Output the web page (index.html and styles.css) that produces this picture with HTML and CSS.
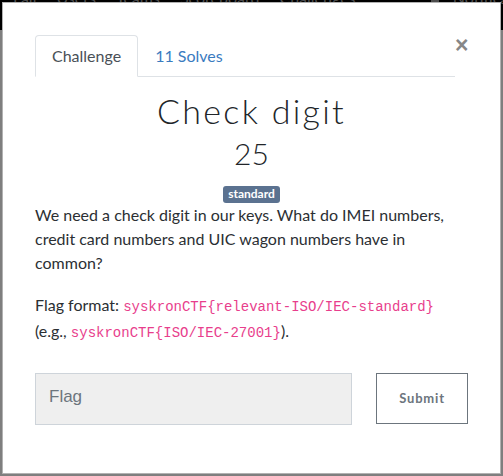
FILE: index.html
```html
<!DOCTYPE html>
<html lang="en">
<head>
<meta charset="utf-8">
<title>Check digit</title>
<link rel="stylesheet" href="styles.css">
</head>
<body>
<nav class="navbar">
  <ul class="nav-items">
    <li>Fall</li>
    <li>Users</li>
    <li>Teams</li>
    <li>Scoreboard</li>
    <li>Challenges</li>
  </ul>
  <div class="nav-right"><span class="bell"></span><span>Notifications</span></div>
</nav>
<div class="backdrop"></div>
<div class="modal">
  <div class="modal-head">
    <ul class="tabs">
      <li class="tab active">Challenge</li>
      <li class="tab">11 Solves</li>
    </ul>
    <button class="close" type="button">×</button>
  </div>
  <div class="modal-body">
    <h2 class="title">Check digit</h2>
    <h3 class="value">25</h3>
    <span class="badge">standard</span>
    <div class="desc">
      <p>We need a check digit in our keys. What do IMEI numbers, credit card numbers and UIC wagon numbers have in common?</p>
      <p>Flag format: <code>syskronCTF{relevant-ISO/IEC-standard}</code> (e.g., <code>syskronCTF{ISO/IEC-27001}</code>).</p>
    </div>
    <form class="flag-row">
      <input class="flag-input" type="text" placeholder="Flag">
      <button class="submit" type="button">Submit</button>
    </form>
  </div>
</div>
</body>
</html>
```
FILE: styles.css
```css
* { box-sizing: border-box; }
html, body { margin: 0; padding: 0; }
body {
  width: 503px;
  height: 476px;
  overflow: hidden;
  background: #ffffff;
  font-family: Lato, "Liberation Sans", sans-serif;
  color: #212529;
}
.navbar {
  height: 30px;
  background: #000;
  display: flex;
  justify-content: space-between;
  overflow: hidden;
}
.nav-items {
  list-style: none;
  margin: -12px 0 0 13px;
  padding: 0;
  display: flex;
  gap: 20px;
  height: 20px;
  font-size: 16px;
  line-height: 20px;
  color: #9a9a9a;
}
.nav-right {
  margin-top: -12px;
  margin-right: -40px;
  display: flex;
  gap: 14px;
  height: 20px;
  font-size: 16px;
  line-height: 20px;
  color: #9a9a9a;
}
.bell {
  width: 8px;
  height: 20px;
  background: #9a9a9a;
  margin-top: -4px;
}
.backdrop {
  position: absolute;
  inset: 0;
  background: rgba(0, 0, 0, 0.5);
}
.modal {
  position: absolute;
  left: 2px;
  top: 2px;
  width: 499px;
  height: 472px;
  background: #fff;
  border: 1px solid rgba(0, 0, 0, 0.3);
  padding: 32px;
}
.modal-head {
  display: flex;
  align-items: flex-start;
}
.tabs {
  flex: 1;
  list-style: none;
  margin: 0;
  padding: 0;
  display: flex;
  border-bottom: 1px solid #dee2e6;
  height: 42px;
}
.tab {
  padding: 8px 16px;
  font-size: 16px;
  line-height: 24px;
  color: #3a7bbf;
  border: 1px solid transparent;
  border-top-left-radius: 4px;
  border-top-right-radius: 4px;
  height: 42px;
}
.tab.active {
  color: #495057;
  background: #fff;
  border-color: #dee2e6 #dee2e6 #fff;
}
.close {
  width: 13px;
  padding: 0;
  margin: 0;
  border: 0;
  background: none;
  font-family: "Liberation Sans", sans-serif;
  font-weight: 700;
  font-size: 23px;
  line-height: 20px;
  color: #878787;
  text-align: right;
}
.modal-body {
  text-align: center;
}
.title {
  margin: 14px 0 0;
  font-size: 34px;
  font-weight: 300;
  letter-spacing: 2.3px;
  line-height: 1.2;
  color: #212529;
}
.value {
  margin: 3px 0 0;
  font-size: 30px;
  font-weight: 300;
  line-height: 1.2;
  color: #212529;
}
.badge {
  display: inline-block;
  margin-top: 15px;
  padding: 2px 5px 3px;
  font-size: 12px;
  font-weight: 700;
  line-height: 12px;
  color: #fff;
  background: #5b7290;
  border-radius: 3px;
  vertical-align: top;
}
.desc {
  text-align: left;
  font-size: 16px;
  line-height: 24px;
  color: #2b2f33;
}
.desc p { margin: 0 0 16px; }
.desc p + p { margin-top: 18px; }
code {
  font-family: "Liberation Mono", monospace;
  font-size: 14px;
  color: #e83e8c;
}
.flag-row {
  display: flex;
  align-items: flex-start;
  gap: 24px;
  margin-top: 28px;
}
.flag-input {
  flex: 1;
  height: 52px;
  border: 1px solid #ced4da;
  background: #efefef;
  padding: 0 13px 4px;
  font-family: "Liberation Sans", sans-serif;
  font-size: 17px;
  color: #495057;
  outline: none;
}
.flag-input::placeholder { color: #6c757d; }
.submit {
  width: 92px;
  height: 51px;
  border: 1px solid #6c757d;
  background: #fff;
  font-family: Lato, sans-serif;
  font-weight: 700;
  font-size: 13px;
  letter-spacing: 0.8px;
  color: #6c757d;
}
```
